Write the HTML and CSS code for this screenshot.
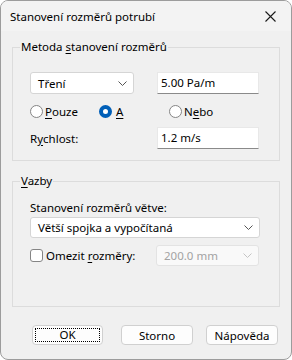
FILE: index.html
```html
<!DOCTYPE html>
<html>
<head>
  <link rel="stylesheet" href="styles.css">
  <title>Stanovení rozměrů potrubí</title>
</head>
<body>
  <div class="window">
    <div class="titlebar">
      <span class="title">Stanovení rozměrů potrubí</span>
      <svg class="close" width="11" height="11" viewBox="0 0 11 11">
        <path d="M0.5 0.5 L10.5 10.5 M10.5 0.5 L0.5 10.5" stroke="#1a1a1a" stroke-width="1.1" fill="none"/>
      </svg>
    </div>

    <div class="content">
      <fieldset class="group group-method">
        <legend>Metoda <u>s</u>tanovení rozměrů</legend>
        <div class="row">
          <div class="combo combo-short">
            <span>Tření</span>
            <svg class="chevron" width="9" height="5" viewBox="0 0 9 5"><polyline points="0.5,0.5 4.5,4.5 8.5,0.5" stroke="#555" fill="none"/></svg>
          </div>
          <div class="textbox">5.00 Pa/m</div>
        </div>
        <div class="radios">
          <label class="radio radio-first"><span class="dot"></span><span><u>P</u>ouze</span></label>
          <label class="radio radio-second"><span class="dot checked"></span><span><u>A</u></span></label>
          <label class="radio"><span class="dot"></span><span>N<u>e</u>bo</span></label>
        </div>
        <div class="row">
          <span class="field-label">R<u>y</u>chlost:</span>
          <div class="textbox">1.2 m/s</div>
        </div>
      </fieldset>

      <fieldset class="group group-bind">
        <legend><u>V</u>azby</legend>
        <div class="plain-label">Stanovení rozměrů větve:</div>
        <div class="combo combo-wide">
          <span>Větší spojka a vypočítaná</span>
          <svg class="chevron" width="9" height="5" viewBox="0 0 9 5"><polyline points="0.5,0.5 4.5,4.5 8.5,0.5" stroke="#555" fill="none"/></svg>
        </div>
        <div class="row check-row">
          <label class="check"><span class="box"></span><span>Omezit <u>r</u>ozměry:</span></label>
          <div class="combo combo-disabled">
            <span>200.0 mm</span>
            <svg class="chevron" width="9" height="5" viewBox="0 0 9 5"><polyline points="0.5,0.5 4.5,4.5 8.5,0.5" stroke="#c4c4c4" fill="none"/></svg>
          </div>
        </div>
      </fieldset>

      <div class="buttons">
        <button class="btn btn-ok"><span class="focus">OK</span></button>
        <button class="btn btn-cancel">Storno</button>
        <button class="btn btn-help">Nápověda</button>
      </div>
    </div>
  </div>
</body>
</html>
```

FILE: styles.css
```css
body {
  margin: 0;
  background-color: #fff;
  font-family: "Noto Sans", "DejaVu Sans", sans-serif;
  font-size: 11.5px;
  color: #000;
}
.window {
  width: 292px;
  height: 360px;
  box-sizing: border-box;
  border: 1px solid #9c9c9c;
  border-radius: 8px;
  background-color: #f0f0f0;
  overflow: hidden;
}
.titlebar {
  height: 30px;
  background-color: #f3f3f3;
  display: flex;
  align-items: center;
  justify-content: space-between;
  padding: 0 15px 0 9px;
}
.title {
  font-size: 11.5px;
}
.content {
  padding: 0 11px;
}
.group {
  margin: 0;
  border: 1px solid #dcdcdc;
  padding: 0 0 0 17px;
  min-width: 0;
}
.group legend {
  margin-left: -10px;
  padding: 0 1px;
  line-height: 16px;
}
u {
  text-decoration: underline;
  text-underline-offset: 2px;
}
.group-method {
  margin-top: 8px;
  padding-top: 17px;
  padding-bottom: 11px;
}
.row {
  display: flex;
  align-items: center;
}
.combo {
  box-sizing: border-box;
  background-color: #fff;
  border: 1px solid #d5d5d5;
  border-radius: 3px;
  display: flex;
  align-items: center;
  justify-content: space-between;
  padding: 0 6px 0 7px;
}
.combo-short {
  width: 104px;
  height: 22px;
}
.combo-wide {
  width: 230px;
  height: 21px;
  margin-top: 1px;
}
.combo-disabled {
  width: 103px;
  height: 21px;
  background-color: #f9f9f9;
  border-color: #e3e3e3;
  color: #a3a3a3;
  margin-left: auto;
  margin-right: 20px;
}
.textbox {
  box-sizing: border-box;
  width: 102px;
  height: 22px;
  margin-left: 23px;
  background-color: #fff;
  border: 1px solid #e8e8e8;
  border-bottom-color: #8a8a8a;
  padding: 0 3px;
  line-height: 20px;
}
.radios {
  display: flex;
  align-items: center;
  margin-top: 10px;
  margin-bottom: 9px;
  height: 14px;
}
.radio {
  display: flex;
  align-items: center;
}
.radio-first {
  width: 69px;
}
.radio-second {
  width: 70px;
}
.dot {
  box-sizing: border-box;
  width: 13px;
  height: 13px;
  border: 1px solid #858585;
  border-radius: 50%;
  background-color: #fff;
  margin-right: 2px;
}
.dot.checked {
  border: 4px solid #005fb8;
  margin-right: 4px;
}
.field-label {
  width: 104px;
}
.plain-label {
  line-height: 16px;
}
.group-bind {
  margin-top: 12px;
  padding-top: 11px;
  padding-bottom: 40px;
}
.check-row {
  margin-top: 7px;
}
.check {
  display: flex;
  align-items: center;
}
.box {
  box-sizing: border-box;
  width: 13px;
  height: 13px;
  border: 1px solid #858585;
  border-radius: 3px;
  background-color: #fff;
  margin-right: 3px;
}
.buttons {
  display: flex;
  margin-top: 18px;
  padding-left: 20px;
}
.btn {
  box-sizing: border-box;
  height: 20px;
  width: 72px;
  background-color: #fdfdfd;
  border: 1px solid #d0d0d0;
  border-radius: 4px;
  font-family: inherit;
  font-size: 11.5px;
  color: #000;
  padding: 0;
}
.btn-ok {
  width: 71px;
  padding: 2px;
}
.focus {
  display: block;
  height: 100%;
  box-sizing: border-box;
  border: 1px dotted #000;
  line-height: 12px;
}
.btn-cancel {
  margin-left: 18px;
}
.btn-help {
  margin-left: 13px;
}
```
